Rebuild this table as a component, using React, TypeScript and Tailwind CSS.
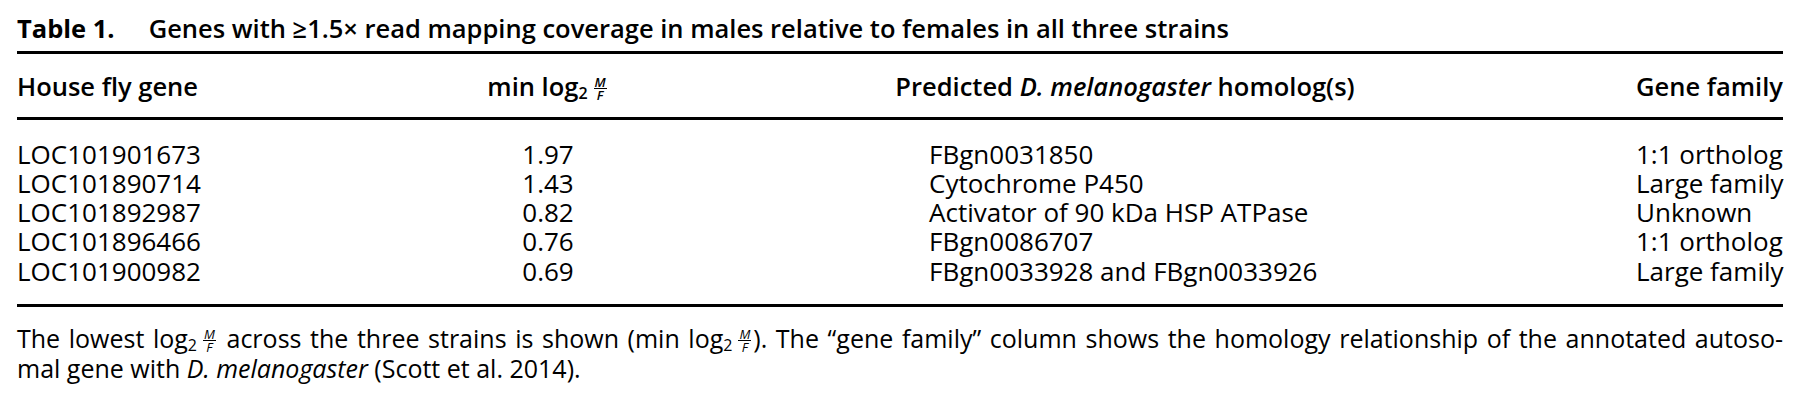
import React from "react";

const rows: [string, string, string, string][] = [
  ["LOC101901673", "1.97", "FBgn0031850", "1:1 ortholog"],
  ["LOC101890714", "1.43", "Cytochrome P450", "Large family"],
  ["LOC101892987", "0.82", "Activator of 90 kDa HSP ATPase", "Unknown"],
  ["LOC101896466", "0.76", "FBgn0086707", "1:1 ortholog"],
  ["LOC101900982", "0.69", "FBgn0033928 and FBgn0033926", "Large family"],
];

function Frac({ bold }: { bold?: boolean }) {
  return (
    <span
      className={`inline-flex flex-col items-center align-middle ml-[6px] mr-[2px] text-[13px] leading-[13px] italic ${
        bold ? "font-semibold" : "font-normal"
      }`}
    >
      <span className="border-b border-black px-[1px] leading-[12px]">M</span>
      <span className="leading-[13px]">F</span>
    </span>
  );
}

function Log2({ bold }: { bold?: boolean }) {
  return (
    <>
      log<sub className="text-[16px] leading-none relative top-[3px]">2</sub>
      <Frac bold={bold} />
    </>
  );
}

export default function App() {
  return (
    <div className="w-[1800px] h-[403px] bg-white text-black font-['Open_Sans','Liberation_Sans',sans-serif] px-[17px] overflow-hidden">
      <div className="pt-[13px] text-[25.5px] leading-[30px] font-semibold whitespace-nowrap">
        <span className="font-bold pr-[34px]">Table 1.</span>
        Genes with ≥1.5× read mapping coverage in males relative to females in all three strains
      </div>
      <div className="mt-[8px] h-[3px] bg-black" />
      <div className="mt-[17px] grid grid-cols-[400px_262px_892px_212px] text-[25.5px] leading-[30px] font-semibold whitespace-nowrap">
        <div>House fly gene</div>
        <div className="text-center">
          min <Log2 bold />
        </div>
        <div className="text-center">
          Predicted <i>D. melanogaster</i> homolog(s)
        </div>
        <div className="text-right">Gene family</div>
      </div>
      <div className="mt-[15px] h-[3px] bg-black" />
      <div className="mt-[19.5px] flex flex-col text-[26px] leading-[29.25px] whitespace-nowrap">
        {rows.map((r) => (
          <div key={r[0]} className="grid grid-cols-[400px_262px_892px_212px]">
            <div>{r[0]}</div>
            <div className="text-center">{r[1]}</div>
            <div className="pl-[250px]">{r[2]}</div>
            <div className="pl-[65px]">{r[3]}</div>
          </div>
        ))}
      </div>
      <div className="mt-[18.5px] h-[3px] bg-black" />
      <div className="mt-[16.5px] text-[25px] leading-[29px]">
        <div className="text-justify [text-align-last:justify]">
          The lowest <Log2 /> across the three strains is shown (min <Log2 />). The “gene family” column shows the homology relationship of the annotated autoso-
        </div>
        <div>
          mal gene with <i>D. melanogaster</i> (Scott et al. 2014).
        </div>
      </div>
    </div>
  );
}
